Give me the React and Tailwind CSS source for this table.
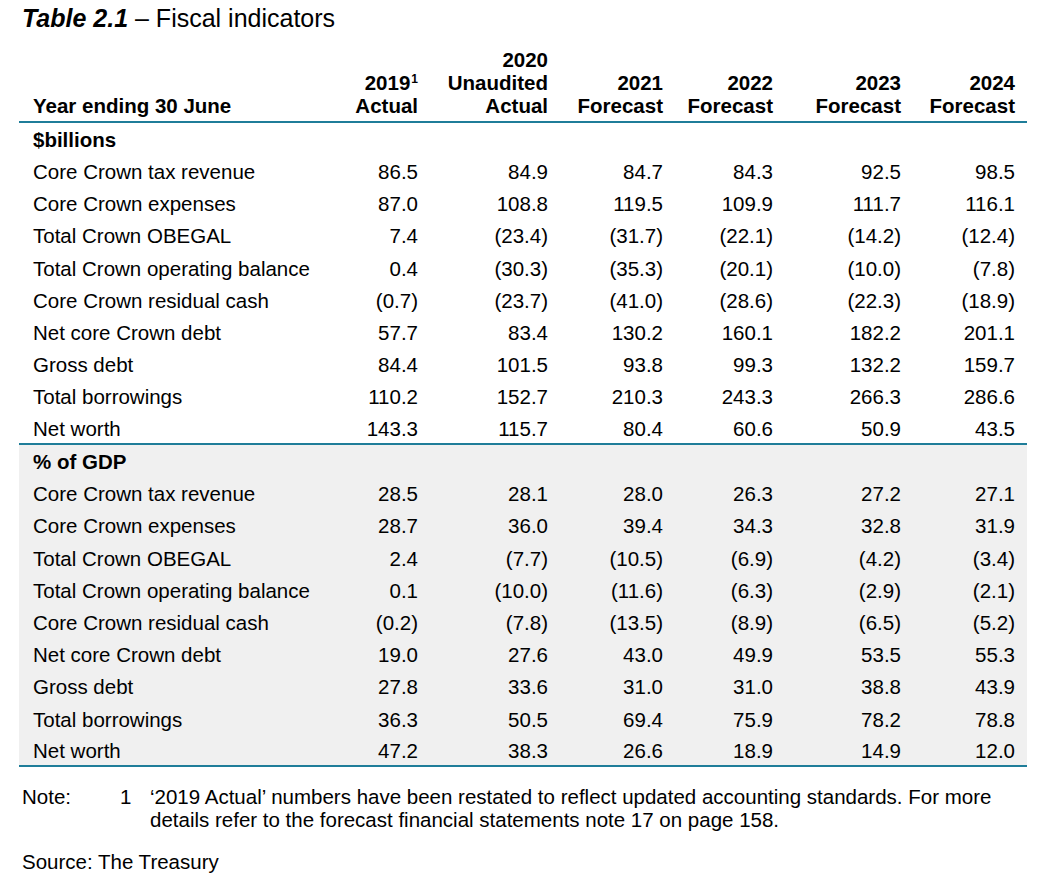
import React from 'react';

const font = { fontFamily: '"Liberation Sans", Arial, sans-serif' };

const rowLabels = [
  'Core Crown tax revenue',
  'Core Crown expenses',
  'Total Crown OBEGAL',
  'Total Crown operating balance',
  'Core Crown residual cash',
  'Net core Crown debt',
  'Gross debt',
  'Total borrowings',
  'Net worth',
];

const billions = [
  ['86.5', '84.9', '84.7', '84.3', '92.5', '98.5'],
  ['87.0', '108.8', '119.5', '109.9', '111.7', '116.1'],
  ['7.4', '(23.4)', '(31.7)', '(22.1)', '(14.2)', '(12.4)'],
  ['0.4', '(30.3)', '(35.3)', '(20.1)', '(10.0)', '(7.8)'],
  ['(0.7)', '(23.7)', '(41.0)', '(28.6)', '(22.3)', '(18.9)'],
  ['57.7', '83.4', '130.2', '160.1', '182.2', '201.1'],
  ['84.4', '101.5', '93.8', '99.3', '132.2', '159.7'],
  ['110.2', '152.7', '210.3', '243.3', '266.3', '286.6'],
  ['143.3', '115.7', '80.4', '60.6', '50.9', '43.5'],
];

const gdp = [
  ['28.5', '28.1', '28.0', '26.3', '27.2', '27.1'],
  ['28.7', '36.0', '39.4', '34.3', '32.8', '31.9'],
  ['2.4', '(7.7)', '(10.5)', '(6.9)', '(4.2)', '(3.4)'],
  ['0.1', '(10.0)', '(11.6)', '(6.3)', '(2.9)', '(2.1)'],
  ['(0.2)', '(7.8)', '(13.5)', '(8.9)', '(6.5)', '(5.2)'],
  ['19.0', '27.6', '43.0', '49.9', '53.5', '55.3'],
  ['27.8', '33.6', '31.0', '31.0', '38.8', '43.9'],
  ['36.3', '50.5', '69.4', '75.9', '78.2', '78.8'],
  ['47.2', '38.3', '26.6', '18.9', '14.9', '12.0'],
];

const Section = ({ title, data, grey }) => (
  <tbody className={grey ? 'bg-[#f0f0f0]' : ''}>
    <tr className="h-[32.5px]">
      <td colSpan={7} className="pl-[14px] font-bold align-middle">{title}</td>
    </tr>
    {data.map((vals, i) => {
      const last = i === data.length - 1;
      const edge = last ? 'border-b-2 border-[#1f7d99]' : '';
      return (
        <tr key={i} className="h-[32.2px]">
          <td className={`pl-[14px] align-middle whitespace-nowrap ${edge}`}>{rowLabels[i]}</td>
          {vals.map((v, j) => (
            <td key={j} className={`pr-[12px] text-right align-middle ${edge}`}>{v}</td>
          ))}
        </tr>
      );
    })}
  </tbody>
);

export default function App() {
  return (
    <div className="bg-white text-black w-[1044px] h-[885px] pl-[19px] pt-[4px]" style={font}>
      <h1 className="text-[25px] leading-[28px] pl-[3px]">
        <span className="font-bold italic">Table 2.1</span> – Fiscal indicators
      </h1>
      <table className="table-fixed border-separate border-spacing-0 w-[1008px] mt-[16px] text-[20.5px] leading-[23px]">
        <colgroup>
          <col className="w-[311px]" />
          <col className="w-[100px]" />
          <col className="w-[130px]" />
          <col className="w-[115px]" />
          <col className="w-[110px]" />
          <col className="w-[128px]" />
          <col className="w-[114px]" />
        </colgroup>
        <thead>
          <tr className="font-bold">
            <th className="pl-[14px] text-left align-bottom pb-[4px] border-b-2 border-[#1f7d99] whitespace-nowrap">Year ending 30 June</th>
            <th className="pr-[12px] text-right align-bottom pb-[4px] border-b-2 border-[#1f7d99]">
              2019<span className="text-[12px] leading-none relative -top-[7px] ml-[1px]">1</span>
              <br />Actual
            </th>
            <th className="pr-[12px] text-right align-bottom pb-[4px] border-b-2 border-[#1f7d99]">
              2020<br />Unaudited<br />Actual
            </th>
            <th className="pr-[12px] text-right align-bottom pb-[4px] border-b-2 border-[#1f7d99]">
              2021<br />Forecast
            </th>
            <th className="pr-[12px] text-right align-bottom pb-[4px] border-b-2 border-[#1f7d99]">
              2022<br />Forecast
            </th>
            <th className="pr-[12px] text-right align-bottom pb-[4px] border-b-2 border-[#1f7d99]">
              2023<br />Forecast
            </th>
            <th className="pr-[12px] text-right align-bottom pb-[4px] border-b-2 border-[#1f7d99]">
              2024<br />Forecast
            </th>
          </tr>
        </thead>
        <Section title="$billions" data={billions} />
        <Section title="% of GDP" data={gdp} grey />
      </table>

      <div className="mt-[18px] flex text-[20.5px] leading-[23px] pl-[3px]">
        <div className="w-[98px] shrink-0">Note:</div>
        <div className="w-[30px] shrink-0">1</div>
        <div className="w-[870px]">
          ‘2019 Actual’ numbers have been restated to reflect updated accounting standards. For more details refer to the forecast financial statements note 17 on page 158.
        </div>
      </div>
      <div className="mt-[19px] text-[20.5px] leading-[23px] pl-[3px]">Source: The Treasury</div>
    </div>
  );
}
